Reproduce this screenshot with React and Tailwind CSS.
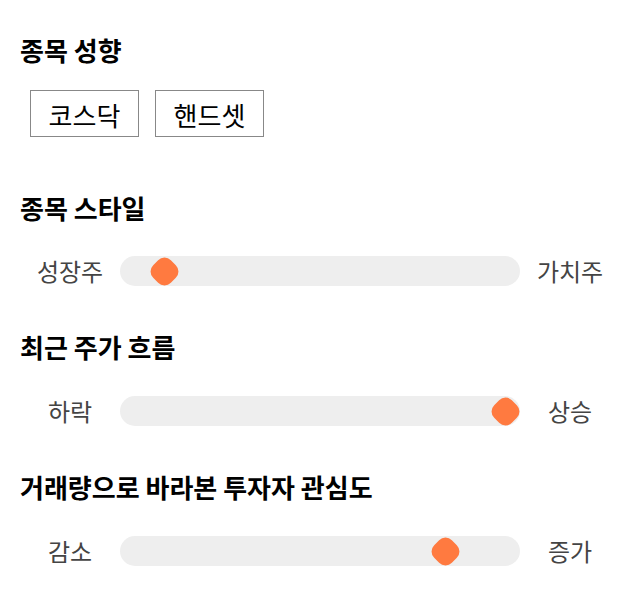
import React from "react";

const font = { fontFamily: '"Noto Sans CJK KR", "Noto Sans", sans-serif' };

const sliders = [
  { title: "종목 스타일", left: "성장주", right: "가치주", value: 0.08, gap: "mt-[55px]", inner: "mt-[32px]" },
  { title: "최근 주가 흐름", left: "하락", right: "상승", value: 1, gap: "mt-[45px]", inner: "mt-[33px]" },
  { title: "거래량으로 바라본 투자자 관심도", left: "감소", right: "증가", value: 0.84, gap: "mt-[45px]", inner: "mt-[33px]" },
];

// track is 400px wide, thumb travels 370px (thumb ~30px)
const Slider = ({ left, right, value }) => {
  return (
    <div className="flex items-center h-[30px]">
      <div className="w-[100px] text-center text-[24px] leading-[30px] text-[#444]">{left}</div>
      <div className="relative w-[400px] h-[30px] rounded-full bg-[#eeeeee]">
        <div
          className="absolute top-[2.5px] w-[25px] h-[25px] -ml-[12.5px] rotate-45 rounded-[9px] bg-[#ff7a40]"
          style={{ left: `${15 + 370 * value}px` }}
        />
      </div>
      <div className="w-[100px] text-center text-[24px] leading-[30px] text-[#444]">{right}</div>
    </div>
  );
};

export default function App() {
  return (
    <div className="bg-white w-[640px] h-[606px] px-[20px] pt-[34px]" style={font}>
      <h2 className="text-[26px] font-bold text-black leading-[32px]">종목 성향</h2>
      <div className="flex gap-[16px] mt-[24px] pl-[10px]">
        <button className="w-[109px] h-[47px] border border-[#888] text-[26px] leading-[47px] text-black">코스닥</button>
        <button className="w-[109px] h-[47px] border border-[#888] text-[26px] leading-[47px] text-black">핸드셋</button>
      </div>

      {sliders.map((s) => (
        <div key={s.title} className={s.gap}>
          <h2 className="text-[26px] font-bold text-black leading-[32px]">{s.title}</h2>
          <div className={s.inner}>
            <Slider left={s.left} right={s.right} value={s.value} />
          </div>
        </div>
      ))}
    </div>
  );
}
